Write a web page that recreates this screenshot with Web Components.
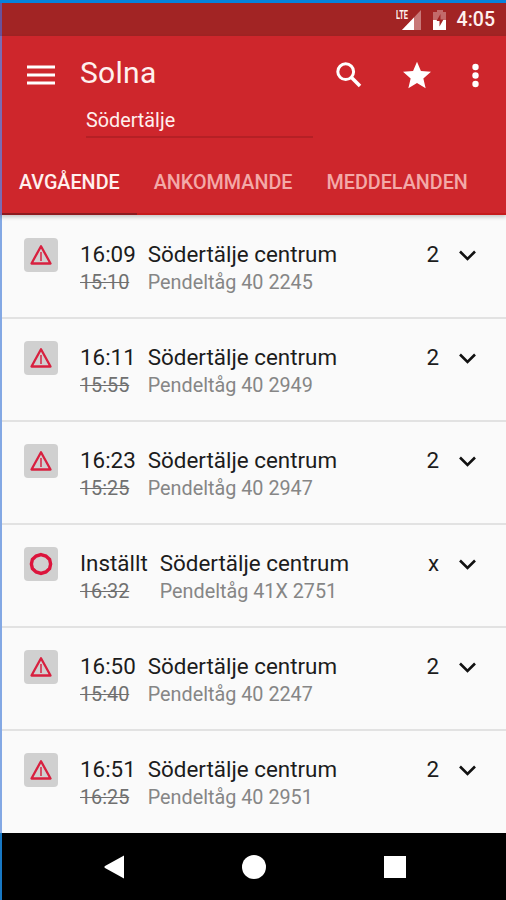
<!DOCTYPE html>
<html lang="sv">
<head>
<meta charset="utf-8">
<title>Solna</title>
<style>
    html, body {
        margin: 0;
        height: 100%;
        overflow: hidden;
    }

    body {
        font-family: Roboto, "Liberation Sans", sans-serif;
        background: #fafafa;
    }
</style>
</head>
<body>
<phone-screen>
    <status-bar slot="status" time="4:05"></status-bar>
    <app-header slot="header" station="Solna" filter="Södertälje">
        <tab-item active>AVGÅENDE</tab-item>
        <tab-item>ANKOMMANDE</tab-item>
        <tab-item>MEDDELANDEN</tab-item>
    </app-header>
    <train-row time="16:09" planned="15:10" train="Pendeltåg 40 2245" track="2">Södertälje centrum</train-row>
    <train-row time="16:11" planned="15:55" train="Pendeltåg 40 2949" track="2">Södertälje centrum</train-row>
    <train-row time="16:23" planned="15:25" train="Pendeltåg 40 2947" track="2">Södertälje centrum</train-row>
    <train-row cancelled time="Inställt" planned="16:32" train="Pendeltåg 41X 2751" track="x">Södertälje centrum</train-row>
    <train-row time="16:50" planned="15:40" train="Pendeltåg 40 2247" track="2">Södertälje centrum</train-row>
    <train-row time="16:51" planned="16:25" train="Pendeltåg 40 2951" track="2">Södertälje centrum</train-row>
    <nav-bar slot="nav"></nav-bar>
</phone-screen>

<script>
class PhoneScreen extends HTMLElement {
    constructor() {
        super();
        this.attachShadow({mode: 'open'}).innerHTML = `
            <style>
                :host {
                    display: flex;
                    flex-direction: column;
                    box-sizing: border-box;
                    width: 506px;
                    height: 900px;
                    border-top: 3px solid #0782dc;
                }

                main {
                    flex: 1;
                    min-height: 0;
                    box-sizing: border-box;
                    padding-top: 1px;
                    overflow: hidden;
                    border-left: 2px solid #83a8e4;
                    background: #fafafa;
                }
            </style>
            <slot name="status"></slot>
            <slot name="header"></slot>
            <main><slot></slot></main>
            <slot name="nav"></slot>
        `;
    }
}

class StatusBar extends HTMLElement {
    constructor() {
        super();
        this.attachShadow({mode: 'open'}).innerHTML = `
            <style>
                :host {
                    display: flex;
                    flex: none;
                    align-items: center;
                    justify-content: flex-end;
                    box-sizing: border-box;
                    height: 33px;
                    padding-right: 11px;
                    border-left: 2px solid #69519a;
                    background: #a22424;
                    color: #fff0ee;
                    font-size: 19.500px;
                    font-weight: 500;
                    line-height: 35px;
                }

                .signal {
                    display: flex;
                    align-items: flex-start;
                    margin-right: 11px;
                }

                .lte {
                    font: 700 12px/10px Roboto, "Liberation Sans", sans-serif;
                    width: 6px;
                    transform: scaleX(0.62);
                    transform-origin: 0 0;
                }

                svg {
                    display: block;
                }

                .battery {
                    margin-right: 10px;
                }
            </style>
            <div class="signal">
                <span class="lte">LTE</span>
                <svg width="20" height="20" viewBox="0 0 20 20">
                    <path d="M19 0V20H0z" fill="#c87878"/>
                    <path d="M12 7.500V20H0z" fill="#fff"/>
                </svg>
            </div>
            <svg class="battery" width="14" height="20" viewBox="0 0 14 20">
                <path d="M4 0h6v2h3v8H0V2h4z" fill="#c26a6a"/>
                <path d="M0 10h13v10H0z" fill="#fff"/>
                <path d="M7.500 4L3.500 11h3v5.500l4-7h-3z" fill="#a22424"/>
            </svg>
            <span>${this.getAttribute('time')}</span>
        `;
    }
}

class AppHeader extends HTMLElement {
    constructor() {
        super();
        this.attachShadow({mode: 'open'}).innerHTML = `
            <style>
                :host {
                    display: flex;
                    flex: none;
                    flex-direction: column;
                    box-sizing: border-box;
                    height: 179px;
                    border-left: 2px solid #7b6cb4;
                    background: #ce262c;
                    color: #fff0ee;
                    box-shadow: 0 2px 4px rgba(0, 0, 0, 0.22);
                    z-index: 1;
                }

                .toolbar {
                    display: flex;
                    align-items: center;
                    height: 66px;
                    padding: 6px 26px 0 25px;
                }

                h1 {
                    flex: 1;
                    margin: -6px 0 0 25px;
                    font-size: 30px;
                    font-weight: 400;
                    letter-spacing: 0.3px;
                }

                svg {
                    display: block;
                    fill: #fff;
                }

                .star {
                    margin: 0 43px 0 41px;
                }

                .filter {
                    width: 227px;
                    height: 31px;
                    margin: -3px 0 0 84px;
                    border-bottom: 2px solid #b52025;
                    font-size: 19.800px;
                    line-height: 32px;
                }

                nav {
                    display: flex;
                    margin-top: auto;
                }
            </style>
            <div class="toolbar">
                <svg width="28" height="20" viewBox="0 0 28 20">
                    <path d="M0 0.500h28v3H0zM0 8.500h28v3H0zM0 16.500h28v3H0z"/>
                </svg>
                <h1>${this.getAttribute('station')}</h1>
                <svg width="26" height="26" viewBox="0 0 26 26">
                    <circle cx="9.700" cy="9.700" r="7.900" fill="none" stroke="#fff" stroke-width="3"/>
                    <path d="M15 15l9 9" stroke="#fff" stroke-width="3.600"/>
                </svg>
                <svg class="star" width="28" height="28" viewBox="2 1.500 20 20">
                    <path d="M12 17.270L18.180 21l-1.640-7.030L22 9.240l-7.190-.61L12 2 9.190 8.630 2 9.240l5.460 4.730L5.820 21z"/>
                </svg>
                <svg width="6" height="25" viewBox="0 0 6 25" style="overflow: visible">
                    <circle cx="1.500" cy="4" r="3.200"/>
                    <circle cx="1.500" cy="12.500" r="3.200"/>
                    <circle cx="1.500" cy="21" r="3.200"/>
                </svg>
            </div>
            <div class="filter">${this.getAttribute('filter')}</div>
            <nav><slot></slot></nav>
        `;
    }
}

class TabItem extends HTMLElement {
    constructor() {
        super();
        this.attachShadow({mode: 'open'}).innerHTML = `
            <style>
                :host {
                    display: block;
                    box-sizing: border-box;
                    height: 64px;
                    padding: 0 17px;
                    border-bottom: 2px solid #c61a1c;
                    color: #f3a9a8;
                    font-size: 19.750px;
                    font-weight: 500;
                    line-height: 63px;
                    white-space: nowrap;
                }

                :host([active]) {
                    border-bottom-color: #8c1a1f;
                    color: #fff0ee;
                }

                :host(:last-of-type) {
                    flex: 1;
                }
            </style>
            <slot></slot>
        `;
    }
}

const WARNING_ICON = `
    <path d="M17 8.200L26.500 25.500H7.500z" fill="none" stroke="#d8203f" stroke-width="2.300" stroke-linejoin="round"/>
    <path d="M17 14v9" stroke="#d8203f" stroke-width="1.800" opacity="0.8"/>
`;
const CANCELLED_ICON = `
    <path d="M17 7.600L21.900 9l3.700 3.500L26.600 17l-1 4.500L21.900 25 17 26.500 12.100 25l-3.700-3.500L7.400 17l1-4.500L12.100 9z"
        fill="none" stroke="#dc143c" stroke-width="3.400"/>
`;

class TrainRow extends HTMLElement {
    constructor() {
        super();
        const icon = this.hasAttribute('cancelled') ? CANCELLED_ICON : WARNING_ICON;

        this.attachShadow({mode: 'open'}).innerHTML = `
            <style>
                :host {
                    display: flex;
                    align-items: flex-start;
                    box-sizing: border-box;
                    height: 103px;
                    padding: 22px 29px 0 22px;
                    border-bottom: 2px solid #e2e2e2;
                    color: #1c1c1c;
                    font-size: 22.400px;
                    line-height: 33px;
                    white-space: nowrap;
                }

                :host(:last-of-type) {
                    border-bottom-color: #fafafa;
                }

                svg {
                    display: block;
                }

                .badge {
                    border-radius: 4px;
                    background: #d0d0d0;
                }

                .info {
                    flex: 1;
                    display: grid;
                    grid-template-columns: auto 1fr;
                    grid-template-rows: 32px 26px;
                    column-gap: 12px;
                    margin-left: 22px;
                }

                small {
                    color: #868686;
                    font-size: 19.800px;
                    line-height: 26px;
                }

                s {
                    color: #707070;
                }

                .chevron {
                    margin: 12px 0 0 20px;
                }
            </style>
            <svg class="badge" width="34" height="34" viewBox="0 0 34 34">${icon}</svg>
            <div class="info">
                <span>${this.getAttribute('time')}</span>
                <span class="to"><slot></slot></span>
                <small><s>${this.getAttribute('planned')}</s></small>
                <small class="train">${this.getAttribute('train')}</small>
            </div>
            <span class="track">${this.getAttribute('track')}</span>
            <svg class="chevron" width="18" height="12" viewBox="0 0 18 12">
                <path d="M1 1.500L8.500 9l7.500-7.500" fill="none" stroke="#111" stroke-width="2.600"/>
            </svg>
        `;
    }
}

class NavBar extends HTMLElement {
    constructor() {
        super();
        this.attachShadow({mode: 'open'}).innerHTML = `
            <style>
                :host {
                    display: flex;
                    flex: none;
                    align-items: center;
                    justify-content: center;
                    box-sizing: border-box;
                    height: 67px;
                    gap: 118px;
                    border-left: 2px solid #1878c4;
                    background: #000;
                }

                svg {
                    display: block;
                    fill: #fff;
                }
            </style>
            <svg width="21" height="24" viewBox="0 0 21 24"><path d="M21 0.500v23L2 13q-1.500-1 0-2z"/></svg>
            <svg width="24" height="24" viewBox="0 0 24 24"><circle cx="12" cy="12" r="12"/></svg>
            <svg width="22" height="22" viewBox="0 0 22 22"><path d="M0 0h22v22H0z"/></svg>
        `;
    }
}

customElements.define('phone-screen', PhoneScreen);
customElements.define('status-bar', StatusBar);
customElements.define('app-header', AppHeader);
customElements.define('tab-item', TabItem);
customElements.define('train-row', TrainRow);
customElements.define('nav-bar', NavBar);
</script>
</body>
</html>
